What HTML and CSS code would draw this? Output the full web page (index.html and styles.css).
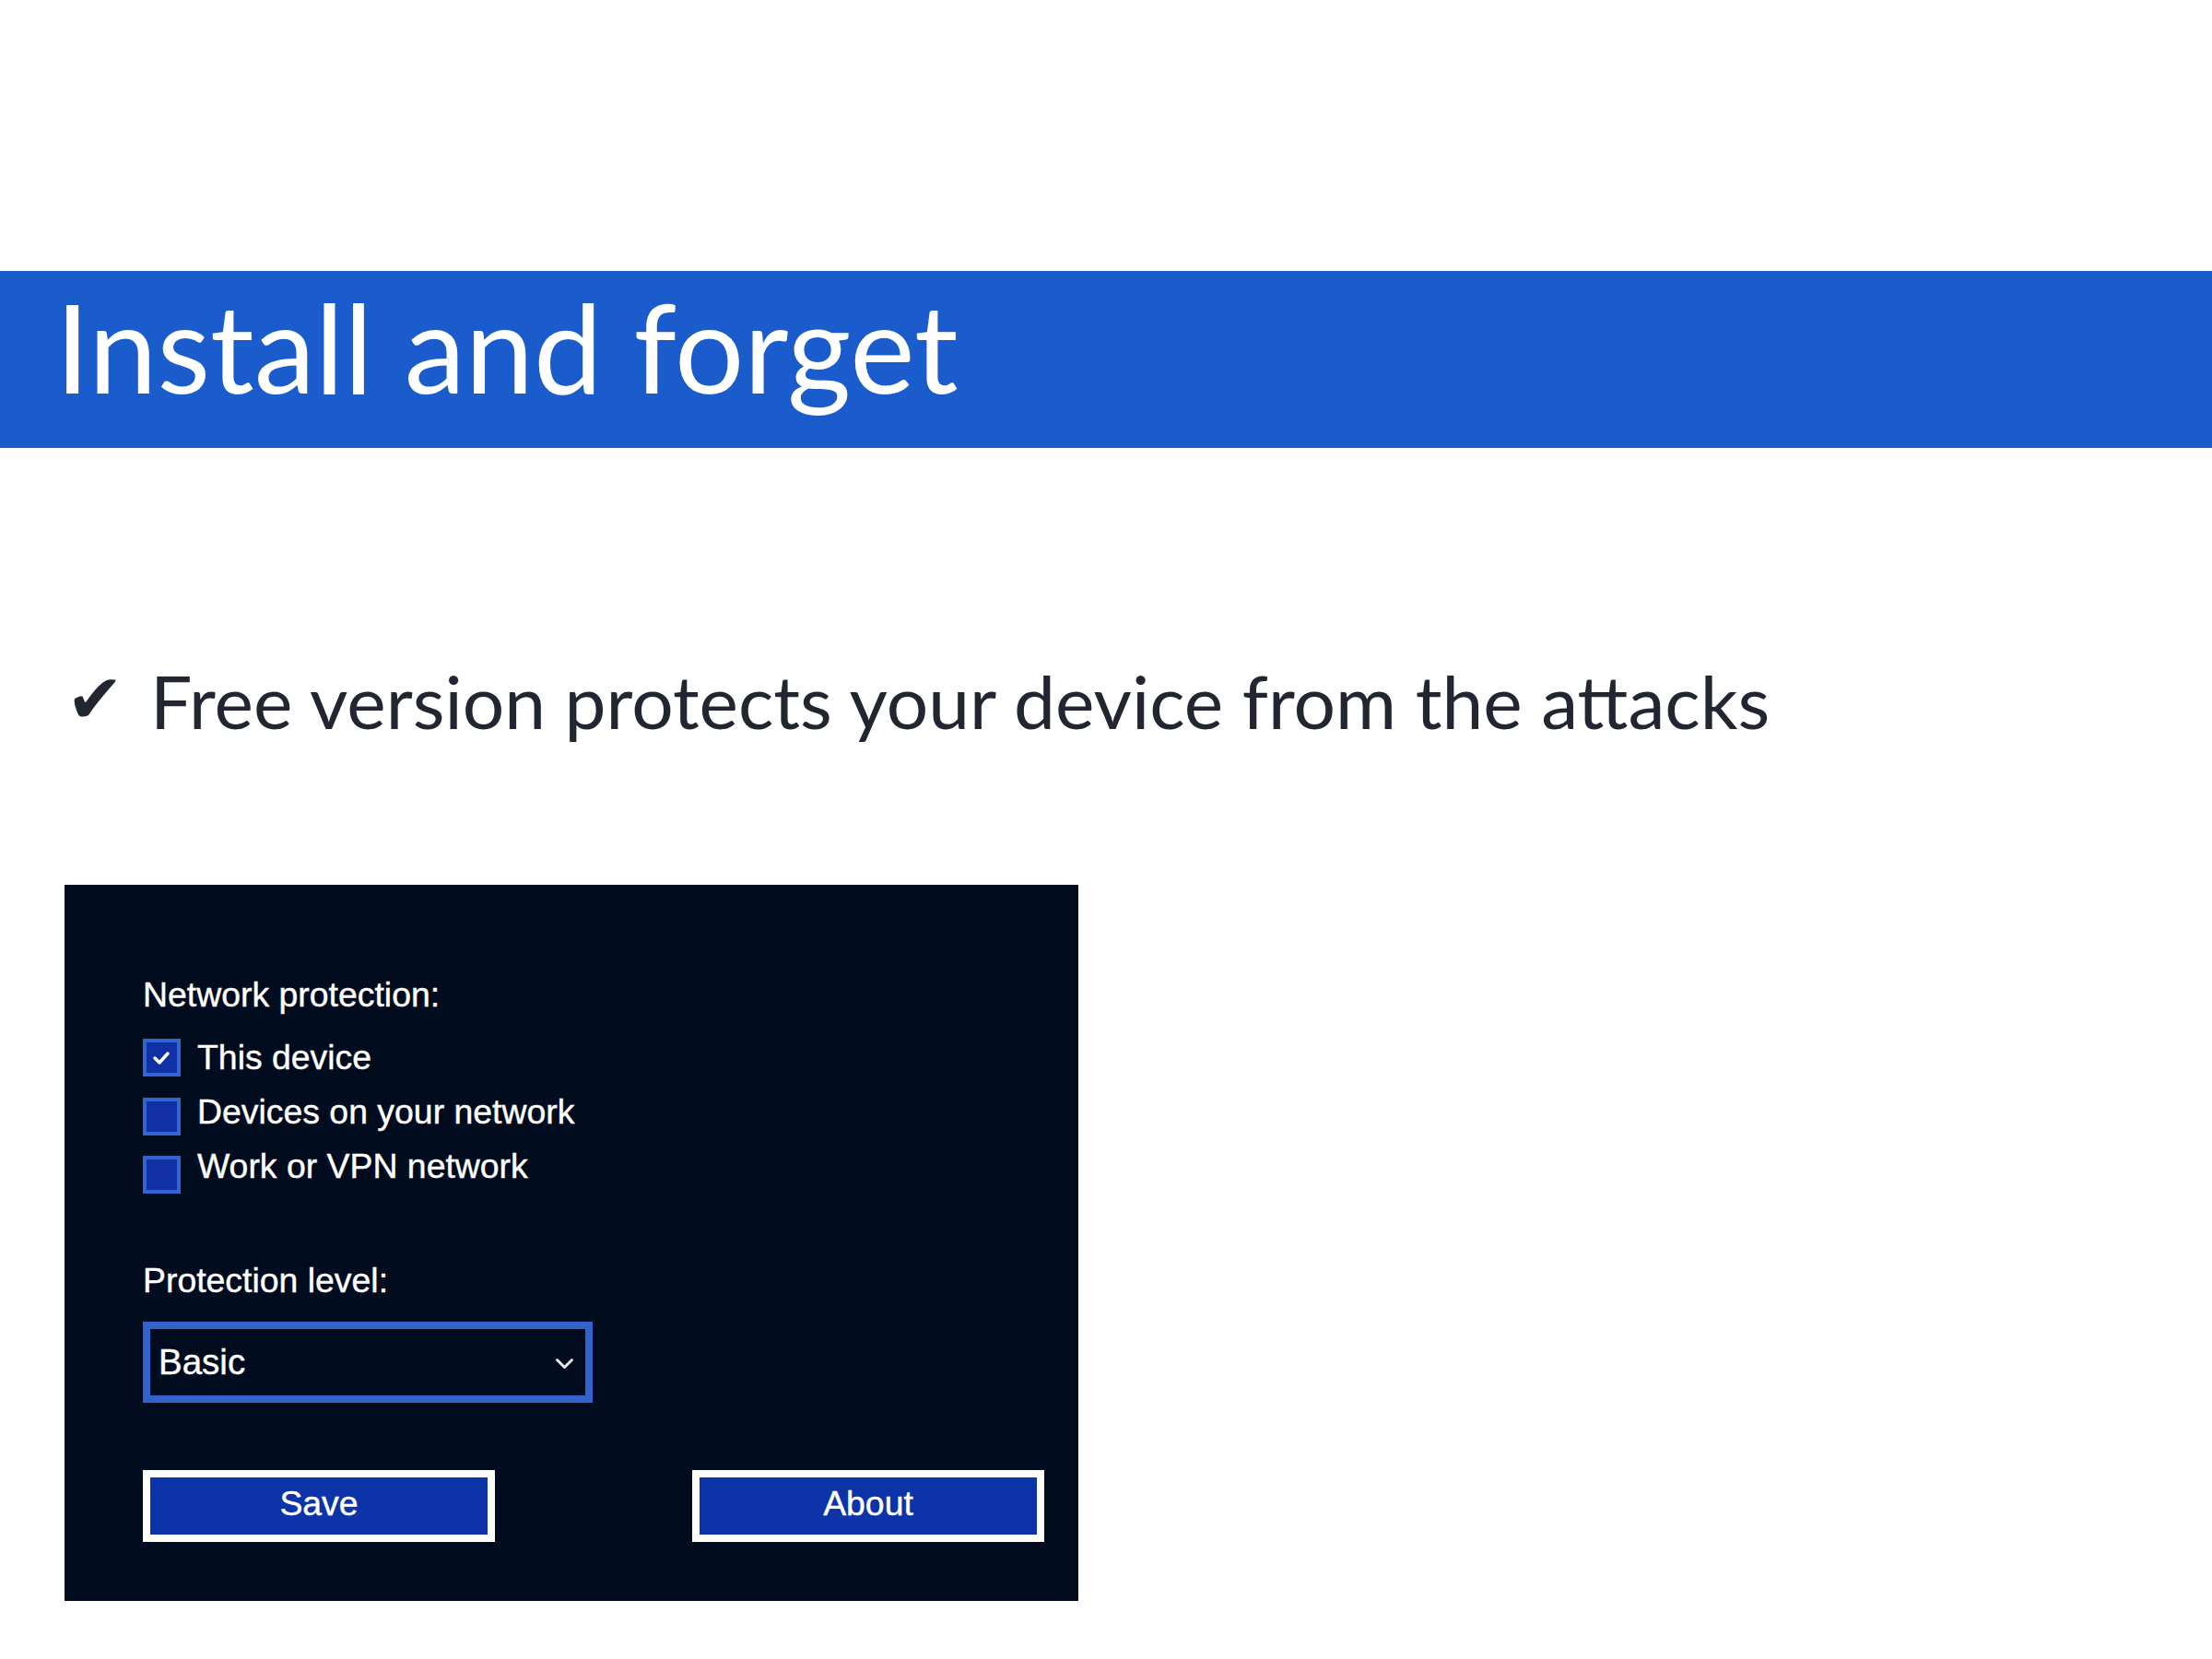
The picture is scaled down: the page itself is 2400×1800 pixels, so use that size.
FILE: index.html
```html
<!DOCTYPE html>
<html lang="en">
<head>
<meta charset="utf-8">
<title>Install and forget</title>
<link rel="stylesheet" href="styles.css">
</head>
<body>
<header class="title-bar">
  <h1 class="title">Install and forget</h1>
</header>
<p class="point"><span class="tick">✔</span>Free version protects your device from the attacks</p>
<section class="panel">
  <div class="label">Network protection:</div>
  <div class="options">
    <div class="boxes">
      <span class="box checked"><svg viewBox="0 0 33 33" width="33" height="33"><path d="M9 17 L14 22 L23 12" fill="none" stroke="#fff" stroke-width="3.5" stroke-linecap="round" stroke-linejoin="round"/></svg></span>
      <span class="box"></span>
      <span class="box"></span>
    </div>
    <div class="names">
      <div>This device</div>
      <div>Devices on your network</div>
      <div>Work or VPN network</div>
    </div>
  </div>
  <div class="label level">Protection level:</div>
  <div class="select">
    <span class="value">Basic</span>
    <svg class="chev" viewBox="0 0 21 13" width="21" height="13"><path d="M2.5 2.5 L10.5 10.5 L18.5 2.5" fill="none" stroke="#e8e8ee" stroke-width="3" stroke-linecap="round" stroke-linejoin="round"/></svg>
  </div>
  <div class="buttons">
    <div class="btn">Save</div>
    <div class="btn">About</div>
  </div>
</section>
</body>
</html>
```
FILE: styles.css
```css
html, body {
  margin: 0;
  padding: 0;
  background: #ffffff;
}
body {
  width: 2400px;
  height: 1800px;
  font-family: Lato, "Liberation Sans", sans-serif;
}
.title-bar {
  margin-top: 294px;
  height: 192px;
  box-sizing: border-box;
  background: #1b5ccd;
  padding: 2px 0 0 60px;
}
.title {
  margin: 0;
  font-family: Lato, sans-serif;
  font-weight: 400;
  font-size: 133px;
  line-height: 1.2;
  color: #ffffff;
}
.point {
  margin: 226px 0 0 0;
  padding-left: 72px;
  font-family: Lato, sans-serif;
  font-size: 80.3px;
  line-height: 96px;
  height: 96px;
  color: #222631;
  white-space: nowrap;
}
.tick {
  display: inline-block;
  font-family: "DejaVu Sans", sans-serif;
  font-size: 74px;
  line-height: 50px;
  width: 91px;
  vertical-align: 7px;
  color: #222631;
}
.panel {
  margin: 152px 0 0 70px;
  width: 1100px;
  box-sizing: border-box;
  background: #020c1f;
  padding: 99px 37px 64px 85px;
  font-family: "Liberation Sans", Arial, sans-serif;
  font-size: 37.4px;
  color: #ffffff;
  -webkit-text-stroke: 0.4px #ffffff;
}
.label {
  line-height: 41px;
  height: 41px;
}
.options {
  display: flex;
  align-items: flex-start;
}
.boxes {
  margin-top: 27px;
  display: flex;
  flex-direction: column;
  gap: 22.5px;
  width: 59px;
}
.box {
  display: block;
  width: 41px;
  height: 41px;
  box-sizing: border-box;
  border: 4px solid #3264d6;
  background: #1030a4;
}
.box svg {
  display: block;
}
.names {
  margin-top: 18px;
  line-height: 59px;
}
.level {
  margin-top: 74px;
}
.select {
  margin-top: 24px;
  width: 488px;
  height: 88px;
  box-sizing: border-box;
  border: 8px solid #3462cc;
  display: flex;
  align-items: center;
  justify-content: space-between;
  padding: 0 12px 0 9px;
}
.value {
  font-size: 38.5px;
  line-height: 72px;
}
.chev {
  display: block;
  margin-top: 2px;
}
.buttons {
  margin-top: 73px;
  display: flex;
  gap: 214px;
}
.btn {
  width: 382px;
  height: 78px;
  box-sizing: border-box;
  border: 8px solid #ffffff;
  background: #0d33a8;
  text-align: center;
  line-height: 56px;
  padding-bottom: 6px;
}
```
